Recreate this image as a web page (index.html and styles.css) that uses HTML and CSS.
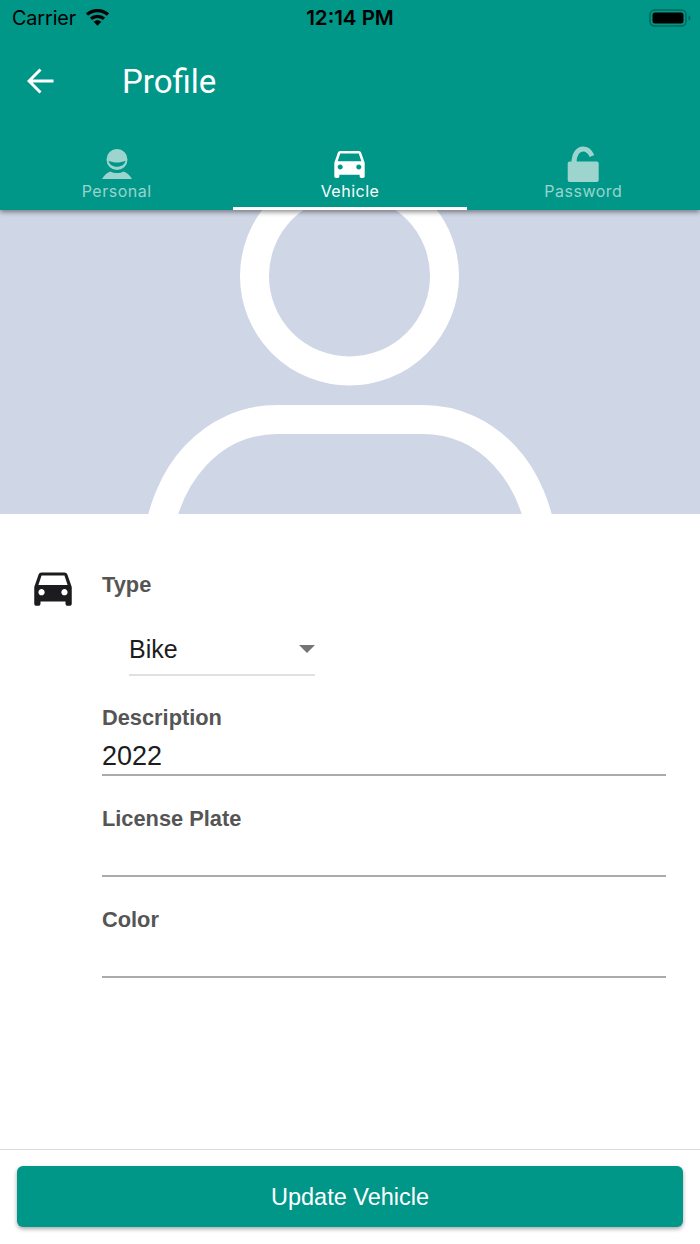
FILE: index.html
```html
<!DOCTYPE html>
<html lang="en">
<head>
<meta charset="utf-8">
<title>Profile</title>
<link rel="stylesheet" href="styles.css">
</head>
<body>
<div class="screen">
  <header class="header">
    <div class="status">
      <div class="status-left">
        <span class="carrier">Carrier</span>
        <svg class="wifi" viewBox="0 0 25 18"><path class="wifi-arc" d="M2 6.500C8 1.200 17 1.200 23 6.500M6 10.700C9.700 7.500 15.300 7.500 19 10.700"/><path d="M12.500 17.800 8.600 13.800C11 11.700 14 11.700 16.400 13.800z"/></svg>
      </div>
      <span class="time">12:14 PM</span>
      <div class="status-right">
        <svg class="battery" viewBox="0 0 42 18"><rect x="1" y="1" width="36" height="16" rx="4.500" class="battery-shell"/><rect x="3.500" y="3.500" width="31" height="11" rx="2.500"/><path class="battery-nub" d="M39.500 6.500c1.200.3 2 1.300 2 2.500s-.8 2.200-2 2.500z"/></svg>
      </div>
    </div>
    <div class="titlebar">
      <svg class="back" viewBox="0 0 28 26"><path d="M26.500 13H2.500M13.500 1.500 2 13l11.500 11.500"/></svg>
      <h1 class="title">Profile</h1>
    </div>
    <nav class="tabs">
      <div class="tab">
        <svg class="tab-icon" viewBox="0 0 40 36"><path fill-rule="evenodd" d="M20 3a10.500 10.500 0 1 1 0 21 10.500 10.500 0 0 1 0-21zM11.500 14.800c.6 3.700 4.200 6 8.500 6s7.900-2.300 8.500-6c-2.600 1.200-5.500 1.800-8.500 1.800s-5.900-.6-8.500-1.800z"/><path d="M5 33c2.400-4.200 5.500-6.600 8.500-7.600 1.900 1 4 1.500 6.500 1.500s4.600-.5 6.500-1.500c3 1 6.100 3.400 8.500 7.600z"/></svg>
        <span class="tab-label">Personal</span>
      </div>
      <div class="tab tab-active">
        <svg class="tab-icon" viewBox="3 5 18 16"><path d="M18.920 6.010C18.720 5.420 18.160 5 17.500 5h-11c-.66 0-1.210.42-1.420 1.010L3 12v8c0 .55.45 1 1 1h1c.55 0 1-.45 1-1v-1h12v1c0 .55.45 1 1 1h1c.55 0 1-.45 1-1v-8l-2.080-5.990zM6.500 16c-.83 0-1.500-.67-1.500-1.500S5.670 13 6.500 13s1.500.67 1.500 1.500S7.330 16 6.500 16zm11 0c-.83 0-1.500-.67-1.500-1.500s.67-1.500 1.500-1.500 1.500.67 1.500 1.500-.67 1.500-1.500 1.500zM5 11l1.500-4.500h11L19 11H5z"/></svg>
        <span class="tab-label">Vehicle</span>
      </div>
      <div class="tab">
        <svg class="tab-icon" viewBox="0 0 40 36"><path class="shackle" d="M11 17C11 8 15 3 20 3c4 0 7 2.500 9 7"/><rect x="4.700" y="15.500" width="31" height="20.500" rx="2"/></svg>
        <span class="tab-label">Password</span>
      </div>
    </nav>
  </header>

  <section class="hero">
    <svg class="hero-art" viewBox="0 0 700 304">
      <circle cx="349.500" cy="66" r="95"/>
      <path d="M157 340 C163 262 214 209.500 277 209.500 H423 C486 209.500 537 262 543 340"/>
    </svg>
  </section>

  <main class="form">
    <div class="type-row">
      <svg class="type-icon" viewBox="0 0 24 24"><path d="M18.920 6.010C18.720 5.420 18.160 5 17.500 5h-11c-.66 0-1.210.42-1.420 1.010L3 12v8c0 .55.45 1 1 1h1c.55 0 1-.45 1-1v-1h12v1c0 .55.45 1 1 1h1c.55 0 1-.45 1-1v-8l-2.080-5.990zM6.500 16c-.83 0-1.500-.67-1.500-1.500S5.670 13 6.500 13s1.500.67 1.500 1.500S7.330 16 6.500 16zm11 0c-.83 0-1.500-.67-1.500-1.500s.67-1.500 1.500-1.500 1.500.67 1.500 1.500-.67 1.500-1.500 1.500zM5 11l1.500-4.500h11L19 11H5z"/></svg>
      <div class="field-label type-label">Type</div>
    </div>
    <div class="select">
      <span class="select-value">Bike</span>
      <span class="select-arrow"></span>
    </div>
    <div class="field">
      <div class="field-label">Description</div>
      <div class="field-input">2022</div>
    </div>
    <div class="field">
      <div class="field-label">License Plate</div>
      <div class="field-input"></div>
    </div>
    <div class="field">
      <div class="field-label">Color</div>
      <div class="field-input"></div>
    </div>
  </main>

  <footer class="footer">
    <button class="update" type="button">Update Vehicle</button>
  </footer>
</div>
</body>
</html>
```
FILE: styles.css
```css
* { box-sizing: border-box; }
html, body { margin: 0; padding: 0; }
body { background: #fff; font-family: "Liberation Sans", Arial, sans-serif; }
.screen { width: 700px; height: 1244px; display: flex; flex-direction: column; overflow: hidden; }

.header { height: 210px; background: #009688; color: #fff; position: relative; z-index: 2; box-shadow: 0 2px 5px rgba(0, 0, 0, .45); flex: none; }
.status { height: 36px; display: grid; grid-template-columns: 1fr auto 1fr; align-items: center; padding: 0 9px; color: #000; font-family: Inter, sans-serif; }
.status-left { display: flex; align-items: center; gap: 9px; padding-left: 3px; }
.carrier { font-size: 19.800px; letter-spacing: -.1px; }
.wifi { width: 25px; height: 18px; margin-top: -3px; }
.wifi-arc { fill: none; stroke: #000; stroke-width: 3.300; }
.time { font-size: 20.500px; font-weight: 600; margin-bottom: 2px; }
.status-right { display: flex; justify-content: flex-end; }
.battery { width: 42px; height: 18px; }
.battery-shell { fill: none; stroke: #00695c; stroke-width: 1.500; }
.battery-nub { fill: #00695c; }

.titlebar { height: 90px; display: flex; align-items: center; padding-left: 27px; }
.back { width: 28px; height: 26px; fill: none; stroke: #fff; stroke-width: 3; margin-right: 67px; }
.title { margin: 0; font-family: Roboto, sans-serif; font-weight: 400; font-size: 33px; line-height: 1; }

.tabs { display: flex; height: 84px; padding-top: 20px; }
.tab { flex: 1; display: flex; flex-direction: column; align-items: center; color: rgba(255, 255, 255, .6); fill: #9dd5ce; margin-top: -20px; padding-top: 20px; }
.tab-active { color: #fff; fill: #fff; box-shadow: inset 0 -3px 0 #fff; }
.tab-icon { width: 40px; height: 36px; display: block; overflow: visible; }
.tab-active .tab-icon { width: 31px; height: 27px; margin: 5px 0 4px; }
.shackle { fill: none; stroke: #9dd5ce; stroke-width: 5; }
.tab-label { font-family: Inter, sans-serif; font-size: 16px; letter-spacing: .5px; line-height: 20px; margin-top: -1px; }

.hero { height: 304px; background: #cfd6e6; flex: none; }
.hero-art { width: 700px; height: 304px; display: block; fill: none; stroke: #fff; stroke-width: 29; }

.form { flex: 1; padding: 48px 34px 0 102px; color: #555; }
.type-row { position: relative; height: 46px; }
.type-icon { position: absolute; left: -74.500px; top: -.500px; width: 50px; height: 50px; fill: #1c1c1e; }
.field-label { font-weight: 700; font-size: 21.800px; line-height: 26px; color: #555; }
.type-label { padding-top: 10px; }
.select { margin: 19px 0 0 27px; width: 186px; height: 49px; border-bottom: 2px solid #e0e0e0; display: flex; justify-content: space-between; align-items: center; padding-bottom: 3px; }
.select-value { font-size: 25px; color: #1c1c1e; }
.select-arrow { width: 0; height: 0; border-left: 8.500px solid transparent; border-right: 8.500px solid transparent; border-top: 8.500px solid #757575; margin-left: -1px; }
.field { margin-top: 29px; height: 71px; display: flex; flex-direction: column; }
.field + .field { margin-top: 30px; }
.field-input { height: 45px; border-bottom: 2px solid #aaa; font-size: 27px; padding-top: 8px; line-height: 35px; color: #1c1c1e; }

.footer { height: 95px; flex: none; border-top: 1px solid #dcdcdc; padding: 16px 17px 0; }
.update { width: 666px; height: 61px; border: 0; border-radius: 6px; background: #009688; color: #fff; font-family: "Liberation Sans", Arial, sans-serif; font-size: 23.500px; padding-top: 2px; box-shadow: 0 2px 4px rgba(0, 0, 0, .35); }
```
